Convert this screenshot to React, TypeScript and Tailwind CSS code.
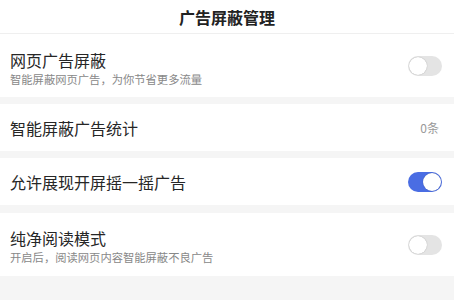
import React from 'react';

const font = { fontFamily: '"Noto Sans CJK SC", "Noto Sans", sans-serif' };

function Toggle({ on = false }: { on?: boolean }) {
  return (
    <div
      className={
        on
          ? 'flex h-[20px] w-[34px] items-center justify-end rounded-full bg-[#4a6de3] p-[1px]'
          : 'flex h-[20px] w-[34px] items-center justify-start rounded-full bg-[#e4e4e4] p-[1px]'
      }
    >
      <div className="h-[18px] w-[18px] rounded-full bg-white shadow-[0_0_1px_rgba(0,0,0,0.35)]" />
    </div>
  );
}

export default function App() {
  return (
    <div className="flex min-h-[300px] w-[454px] flex-col bg-[#f5f5f5]" style={font}>
      {/* header */}
      <div className="flex h-[34px] items-center justify-center border-b border-[#efefef] bg-white">
        <span className="text-[16px] font-bold leading-[20px] text-[#222]">广告屏蔽管理</span>
      </div>

      {/* web ad block */}
      <div className="flex h-[63px] items-start justify-between bg-white pl-[10px] pr-[12px] pt-[15px]">
        <div className="flex flex-col">
          <span className="text-[16px] leading-[22px] text-[#262626]">网页广告屏蔽</span>
          <span className="text-[11.3px] leading-[16px] text-[#888]">智能屏蔽网页广告，为你节省更多流量</span>
        </div>
        <div className="mt-[7px]">
          <Toggle />
        </div>
      </div>

      <div className="h-[7px]" />

      {/* stats */}
      <div className="flex h-[47px] items-center justify-between bg-white pl-[10px] pr-[15px]">
        <span className="text-[16px] leading-[22px] text-[#262626]">智能屏蔽广告统计</span>
        <span className="text-[12px] text-[#999]">0条</span>
      </div>

      <div className="h-[7px]" />

      {/* splash ad */}
      <div className="flex h-[47px] items-center justify-between bg-white pl-[10px] pr-[12px]">
        <span className="text-[16px] leading-[22px] text-[#262626]">允许展现开屏摇一摇广告</span>
        <Toggle on />
      </div>

      <div className="h-[8px]" />

      {/* clean reading */}
      <div className="flex h-[63px] items-start justify-between bg-white pl-[10px] pr-[12px] pt-[14px]">
        <div className="flex flex-col">
          <span className="text-[16px] leading-[22px] text-[#262626]">纯净阅读模式</span>
          <span className="text-[11.3px] leading-[16px] text-[#888]">开启后，阅读网页内容智能屏蔽不良广告</span>
        </div>
        <div className="mt-[8px]">
          <Toggle />
        </div>
      </div>
    </div>
  );
}
